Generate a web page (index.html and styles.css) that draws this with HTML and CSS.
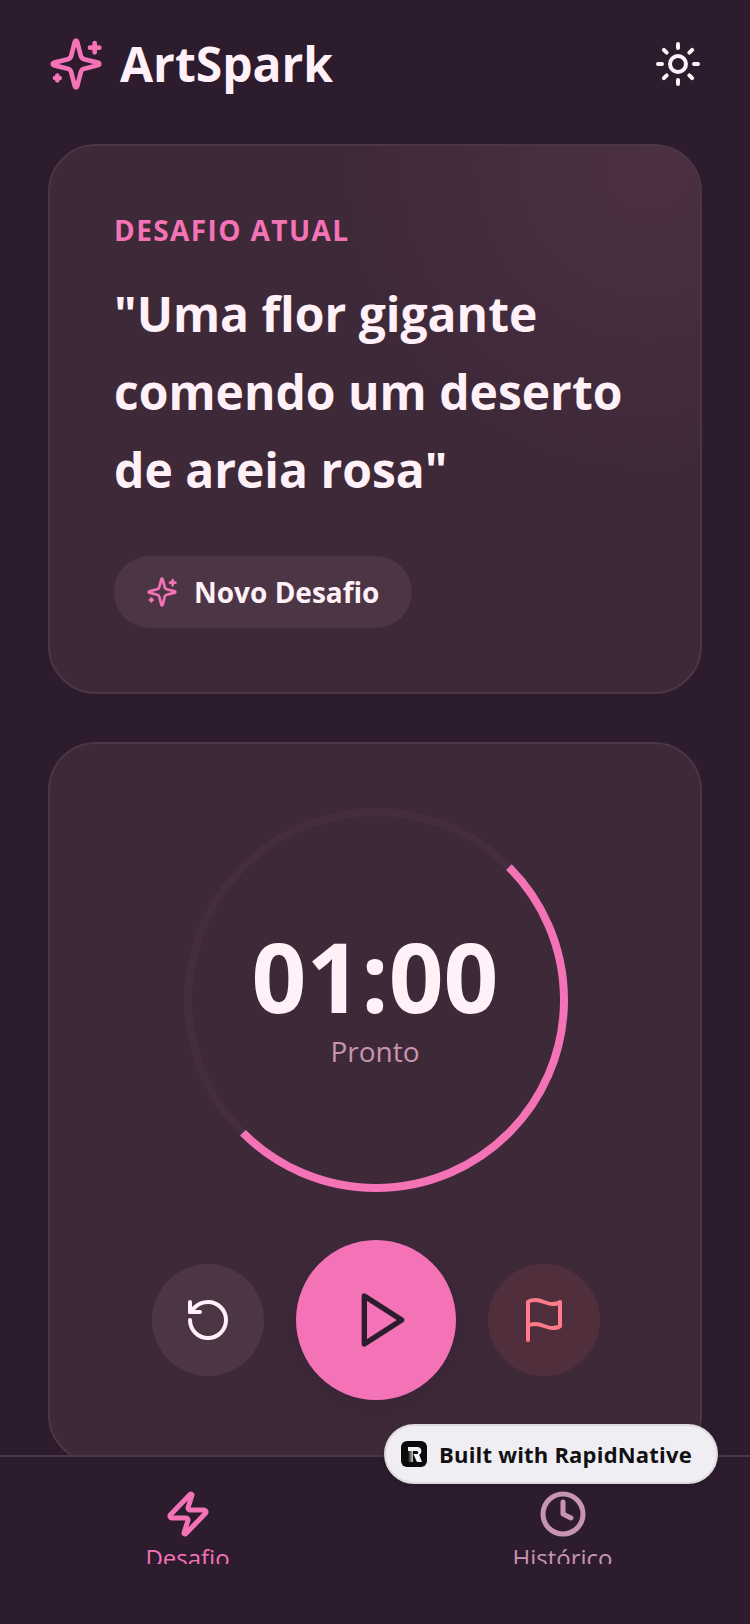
FILE: index.html
```html
<!DOCTYPE html>
<html lang="pt-BR">
<head>
  <meta charset="UTF-8" />
  <title>ArtSpark</title>
  <link rel="stylesheet" href="styles.css">
</head>
<body>
  <div class="app">
    <header class="header">
      <div class="brand">
        <svg class="icon icon-brand" viewBox="0 0 24 24">
          <path d="M9.937 15.5A2 2 0 0 0 8.5 14.063l-6.135-1.582a.5.5 0 0 1 0-.962L8.5 9.936A2 2 0 0 0 9.937 8.5l1.582-6.135a.5.5 0 0 1 .963 0L14.063 8.5A2 2 0 0 0 15.5 9.937l6.135 1.581a.5.5 0 0 1 0 .964L15.5 14.063a2 2 0 0 0-1.437 1.437l-1.582 6.135a.5.5 0 0 1-.963 0z"/>
          <path d="M20 3v4M22 5h-4M4 17v2M5 18H3"/>
        </svg>
        <h1>ArtSpark</h1>
      </div>
      <svg class="icon icon-sun" viewBox="0 0 24 24">
        <circle cx="12" cy="12" r="4"/>
        <path d="M12 2v2M12 20v2M4.93 4.93l1.41 1.41M17.66 17.66l1.41 1.41M2 12h2M20 12h2M6.34 17.66l-1.41 1.41M19.07 4.93l-1.41 1.41"/>
      </svg>
    </header>

    <main class="content">
      <section class="card card-challenge">
        <div class="eyebrow">DESAFIO ATUAL</div>
        <h2 class="prompt">"Uma flor gigante comendo um deserto de areia rosa"</h2>
        <button class="new-btn">
          <svg class="icon icon-new" viewBox="0 0 24 24">
            <path d="M9.937 15.5A2 2 0 0 0 8.5 14.063l-6.135-1.582a.5.5 0 0 1 0-.962L8.5 9.936A2 2 0 0 0 9.937 8.5l1.582-6.135a.5.5 0 0 1 .963 0L14.063 8.5A2 2 0 0 0 15.5 9.937l6.135 1.581a.5.5 0 0 1 0 .964L15.5 14.063a2 2 0 0 0-1.437 1.437l-1.582 6.135a.5.5 0 0 1-.963 0z"/>
            <path d="M20 3v4M22 5h-4M4 17v2M5 18H3"/>
          </svg>
          <span>Novo Desafio</span>
        </button>
      </section>

      <section class="card card-timer">
        <div class="timer">
          <svg class="timer-ring" viewBox="0 0 384 384">
            <circle class="ring-track" cx="192" cy="192" r="188"/>
            <circle class="ring-progress" cx="192" cy="192" r="188" transform="rotate(-45 192 192)"/>
          </svg>
          <div class="time">01:00</div>
          <div class="status">Pronto</div>
        </div>
        <div class="controls">
          <button class="round-btn btn-reset">
            <svg class="icon icon-48" viewBox="0 0 24 24">
              <path d="M3 12a9 9 0 1 0 9-9 9.75 9.75 0 0 0-6.74 2.74L3 8"/>
              <path d="M3 3v5h5"/>
            </svg>
          </button>
          <button class="round-btn btn-play">
            <svg class="icon icon-play" viewBox="0 0 24 24">
              <polygon points="5 3 19 12 5 21 5 3"/>
            </svg>
          </button>
          <button class="round-btn btn-flag">
            <svg class="icon icon-48" viewBox="0 0 24 24">
              <path d="M4 15s1-1 4-1 5 2 8 2 4-1 4-1V3s-1 1-4 1-5-2-8-2-4 1-4 1z"/>
              <path d="M4 22v-7"/>
            </svg>
          </button>
        </div>
      </section>
    </main>

    <nav class="tabbar">
      <div class="tabs">
        <div class="tab tab-active">
          <svg class="icon icon-48 icon-tab" viewBox="0 0 24 24">
            <path d="M4 14a1 1 0 0 1-.78-1.63l9.9-10.2a.5.5 0 0 1 .86.46l-1.92 6.02A1 1 0 0 0 13 10h7a1 1 0 0 1 .78 1.63l-9.9 10.2a.5.5 0 0 1-.86-.46l1.92-6.02A1 1 0 0 0 11 14z"/>
          </svg>
          <span class="tab-label">Desafio</span>
        </div>
        <div class="tab">
          <svg class="icon icon-48 icon-tab" viewBox="0 0 24 24">
            <circle cx="12" cy="12" r="10"/>
            <polyline points="12 6 12 12 16 14"/>
          </svg>
          <span class="tab-label">Histórico</span>
        </div>
      </div>
    </nav>

    <div class="made-with">
      <svg class="made-logo" viewBox="0 0 26 26">
        <defs>
          <linearGradient id="stem" x1="0" y1="0" x2="1" y2="0">
            <stop offset="0" stop-color="#0b0b0d"/>
            <stop offset="1" stop-color="#c9c9cc"/>
          </linearGradient>
        </defs>
        <rect width="26" height="26" rx="6" fill="#0b0b0d"/>
        <rect x="7" y="9" width="5" height="12" fill="url(#stem)"/>
        <path d="M7 6h9.5a4 4 0 0 1 1.6 7.6L21 21h-5l-3.6-8h3.4a1.5 1.5 0 0 0 0-3H7z" fill="#f4f4f6"/>
      </svg>
      <span>Built with RapidNative</span>
    </div>
  </div>
</body>
</html>
```

FILE: styles.css
```css
* {
  box-sizing: border-box;
}

html, body {
  margin: 0;
  height: 100%;
}

body {
  background: #2d1b2e;
  color: #fff1f7;
  font-family: "Open Sans", "Liberation Sans", sans-serif;
}

.app {
  position: relative;
  display: flex;
  flex-direction: column;
  width: 750px;
  height: 1624px;
  overflow: hidden;
}

.icon {
  display: block;
  flex: none;
  fill: none;
  stroke: currentColor;
  stroke-width: 2;
  stroke-linecap: round;
  stroke-linejoin: round;
}

.icon-48 {
  width: 48px;
  height: 48px;
}

/* header */
.header {
  display: flex;
  align-items: center;
  justify-content: space-between;
  height: 144px;
  padding: 0 48px 16px;
  flex: none;
}

.brand {
  display: flex;
  align-items: center;
  gap: 16px;
}

.brand h1 {
  margin: 0;
  font-size: 48px;
  line-height: 56px;
  font-weight: 700;
}

.icon-brand {
  width: 56px;
  height: 56px;
  color: #f472b6;
}

.icon-sun {
  width: 48px;
  height: 48px;
}

/* cards */
.content {
  flex: 1;
  min-height: 0;
  overflow: hidden;
  padding: 0 48px;
}

.card {
  border: 2px solid #4c3646;
  border-radius: 48px;
  background: #3e2939;
}

.card-challenge {
  height: 550px;
  padding: 64px 64px 0;
  background: radial-gradient(circle 300px at 92% 4%, #4c3044 0%, #3e2939 100%);
}

.eyebrow {
  font-size: 28px;
  line-height: 40px;
  font-weight: 700;
  letter-spacing: 1.4px;
  color: #f472b6;
}

.prompt {
  margin: 25px 0 47px;
  font-size: 48px;
  line-height: 78px;
  font-weight: 700;
}

.new-btn {
  display: inline-flex;
  align-items: center;
  gap: 16px;
  height: 72px;
  padding: 0 33px 0 32px;
  border: none;
  border-radius: 36px;
  background: #4c3646;
  color: #fff1f7;
  font: 700 28px "Open Sans", "Liberation Sans", sans-serif;
}

.icon-new {
  width: 32px;
  height: 32px;
  color: #f472b6;
}

.card-timer {
  margin-top: 48px;
  padding: 64px 0 0 2px;
  height: 721px;
}

/* timer */
.timer {
  position: relative;
  display: flex;
  flex-direction: column;
  align-items: center;
  justify-content: center;
  width: 384px;
  height: 384px;
  margin: 0 auto;
  padding: 0 2px 12px 0;
}

.timer-ring {
  position: absolute;
  top: 0;
  left: 0;
  width: 100%;
  height: 100%;
  fill: none;
  stroke-width: 8;
}

.ring-track {
  stroke: #442e3e;
}

.ring-progress {
  stroke: #f472b6;
  stroke-dasharray: 590.6 1181.2;
}

.time {
  position: relative;
  margin-bottom: 1px;
  font-size: 96px;
  line-height: 112px;
  font-weight: 700;
}

.status {
  position: relative;
  font-size: 28px;
  line-height: 36px;
  color: #c795b0;
}

.controls {
  display: flex;
  align-items: center;
  justify-content: center;
  gap: 32px;
  margin-top: 48px;
}

.round-btn {
  display: flex;
  align-items: center;
  justify-content: center;
  width: 112px;
  height: 112px;
  padding: 0;
  border: none;
  border-radius: 50%;
}

.btn-reset {
  background: #4c3646;
  color: #fff1f7;
}

.btn-play {
  width: 160px;
  height: 160px;
  background: #f472b6;
  color: #2d1b2e;
  box-shadow: 0 8px 24px rgba(45, 27, 46, 0.25);
}

.icon-play {
  width: 64px;
  height: 64px;
  margin-left: 14px;
}

.btn-flag {
  background: #502e3c;
  color: #ff7b8a;
}

/* tabs */
.tabbar {
  flex: none;
  height: 169px;
  border-top: 2px solid #4c3646;
  background: #2d1b2e;
}

.tabs {
  display: flex;
  height: 107px;
  overflow: hidden;
  padding-top: 33px;
}

.tab {
  flex: 1;
  display: flex;
  flex-direction: column;
  align-items: center;
  color: #c795b0;
}

.tab-active {
  color: #f472b6;
}

.icon-tab {
  stroke-width: 2.5;
}

.tab-label {
  margin-top: 4px;
  font-size: 24px;
  line-height: 32px;
}

/* badge */
.made-with {
  position: absolute;
  left: 384px;
  top: 1424px;
  display: flex;
  align-items: center;
  gap: 12px;
  width: 334px;
  height: 60px;
  padding-left: 15px;
  border: 2px solid #dcd9de;
  border-radius: 30px;
  background: #f0eef2;
  color: #111114;
  font-size: 22px;
  font-weight: 700;
  letter-spacing: 0.2px;
  box-shadow: 0 2px 8px rgba(0, 0, 0, 0.15);
}

.made-logo {
  width: 26px;
  height: 26px;
  flex: none;
}
```
